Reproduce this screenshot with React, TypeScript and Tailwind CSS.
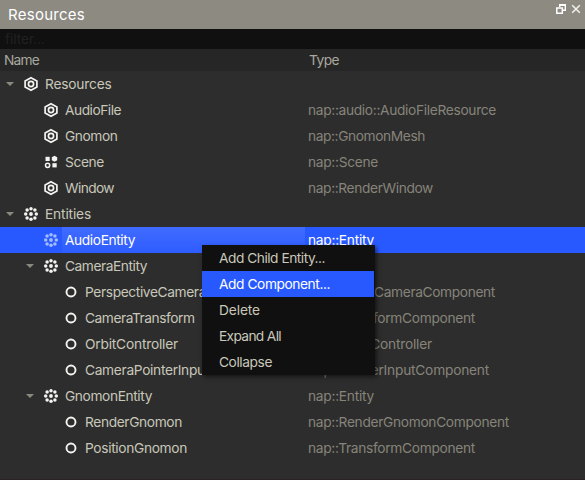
import { useLayoutEffect, useRef } from "react";
import type { ReactNode } from "react";

type Icon = "resource" | "scene" | "entity" | "component";
type Row = {
  name: string;
  width: number;
  icon: Icon;
  depth: 0 | 1 | 2;
  open?: boolean;
  type?: string;
  typeWidth?: number;
  selected?: boolean;
};

const rows: Row[] = [
  { name: "Resources", width: 66.5, icon: "resource", depth: 0, open: true },
  { name: "AudioFile", width: 56, icon: "resource", depth: 1, type: "nap::audio::AudioFileResource", typeWidth: 188 },
  { name: "Gnomon", width: 52.5, icon: "resource", depth: 1, type: "nap::GnomonMesh", typeWidth: 117 },
  { name: "Scene", width: 39, icon: "scene", depth: 1, type: "nap::Scene", typeWidth: 70 },
  { name: "Window", width: 49, icon: "resource", depth: 1, type: "nap::RenderWindow", typeWidth: 125 },
  { name: "Entities", width: 46, icon: "entity", depth: 0, open: true },
  { name: "AudioEntity", width: 70, icon: "entity", depth: 1, type: "nap::Entity", typeWidth: 66, selected: true },
  { name: "CameraEntity", width: 82, icon: "entity", depth: 1, open: true },
  { name: "PerspectiveCamera", width: 121, icon: "component", depth: 2, type: "nap::PerspCameraComponent", typeWidth: 187 },
  { name: "CameraTransform", width: 109.5, icon: "component", depth: 2, type: "nap::TransformComponent", typeWidth: 167 },
  { name: "OrbitController", width: 93, icon: "component", depth: 2, type: "nap::OrbitController", typeWidth: 124 },
  { name: "CameraPointerInput", width: 124, icon: "component", depth: 2, type: "nap::PointerInputComponent", typeWidth: 181 },
  { name: "GnomonEntity", width: 87, icon: "entity", depth: 1, open: true, type: "nap::Entity", typeWidth: 66 },
  { name: "RenderGnomon", width: 97, icon: "component", depth: 2, type: "nap::RenderGnomonComponent", typeWidth: 201 },
  { name: "PositionGnomon", width: 102, icon: "component", depth: 2, type: "nap::TransformComponent", typeWidth: 167 },
];

const menu = [
  { label: "Add Child Entity...", width: 106 },
  { label: "Add Component...", width: 111, active: true },
  { label: "Delete", width: 41 },
  { label: "Expand All", width: 62 },
  { label: "Collapse", width: 53 },
];

const indents = { 0: "w-[22px]", 1: "w-[42px]", 2: "w-[62px]" };

/** Text whose tracking is adjusted so that it fills the given width. */
function Label({ text, width, className = "" }: { text: string; width: number; className?: string }) {
  const ref = useRef<HTMLSpanElement>(null);
  useLayoutEffect(() => {
    const el = ref.current;
    if (!el) return;
    el.style.letterSpacing = "0px";
    const natural = el.getBoundingClientRect().width;
    el.style.letterSpacing = `${(width - natural) / text.length}px`;
  }, [text, width]);
  return (
    <span ref={ref} className={`inline-block shrink-0 whitespace-pre ${className}`}>
      {text}
    </span>
  );
}

function Svg({ children, className }: { children: ReactNode; className: string }) {
  return (
    <svg viewBox="0 0 18 18" className={`h-[18px] w-[18px] shrink-0 ${className}`} fill="currentColor">
      {children}
    </svg>
  );
}

function RowIcon({ icon, selected }: { icon: Icon; selected?: boolean }) {
  const color = selected ? "text-[#a3bbff]" : "text-[#f4f4f2]";
  if (icon === "resource")
    return (
      <Svg className={color}>
        <path d="M9 2.8 14.9 6v6L9 15.2 3.1 12V6Z" fill="none" stroke="currentColor" strokeWidth="1.7" />
        <circle cx="9" cy="9" r="2.6" fill="none" stroke="currentColor" strokeWidth="1.7" />
      </Svg>
    );
  if (icon === "scene")
    return (
      <Svg className={color}>
        <rect x="3.5" y="3.8" width="4.2" height="4.2" />
        <path d="M12.5 2.8 15.2 4.3v2.9l-2.7 1.5-2.7-1.5V4.3Z" />
        <circle cx="5.6" cy="12.3" r="2.1" fill="none" stroke="currentColor" strokeWidth="1.5" />
        <rect x="10.4" y="10.2" width="4.3" height="4.2" />
      </Svg>
    );
  if (icon === "entity")
    return (
      <Svg className={color}>
        <circle cx="9" cy="9" r="1.9" />
        <circle cx="9" cy="3.7" r="1.75" />
        <circle cx="12.9" cy="5.1" r="1.75" />
        <circle cx="14.3" cy="9" r="1.75" />
        <circle cx="12.9" cy="12.9" r="1.75" />
        <circle cx="9" cy="14.3" r="1.75" />
        <circle cx="5.1" cy="12.9" r="1.75" />
        <circle cx="3.7" cy="9" r="1.75" />
        <circle cx="5.1" cy="5.1" r="1.75" />
      </Svg>
    );
  return (
    <Svg className={color}>
      <circle cx="9" cy="9" r="4.5" fill="none" stroke="currentColor" strokeWidth="1.9" />
    </Svg>
  );
}

function TreeRow({ row }: { row: Row }) {
  return (
    <div className={`flex h-[26px] shrink-0 ${row.selected ? "bg-[#2859ff] text-white" : "text-[#c8c7b9]"}`}>
      <div className="flex w-[305px] shrink-0 items-center">
        <div className={`flex shrink-0 justify-end pr-2 ${indents[row.depth]}`}>
          {row.open && (
            <svg viewBox="0 0 8 4" className="h-1 w-2 fill-[#8b897e]">
              <path d="M0 0h8L4 4Z" />
            </svg>
          )}
        </div>
        <RowIcon icon={row.icon} selected={row.selected} />
        <div
          className={`ml-[2px] flex h-full grow items-center pl-[3px] ${
            row.selected ? "bg-linear-to-b from-[#416bff] to-[#2e5dff]" : ""
          }`}
        >
          <Label text={row.name} width={row.width} />
        </div>
      </div>
      <div className={`flex items-center pl-[3px] ${row.selected ? "" : "text-[#86847a]"}`}>
        {row.type && <Label text={row.type} width={row.typeWidth ?? 66} />}
      </div>
    </div>
  );
}

export default function App() {
  return (
    <div className="relative flex h-[480px] w-[585px] flex-col overflow-hidden bg-[#2d2d2d] font-[Inter,sans-serif] text-[13.75px] leading-[18px]">
      <div className="flex h-[29px] shrink-0 justify-between bg-[#8d8a82] pl-2 text-white">
        <div className="flex items-center pt-px">
          <Label text="Resources" width={77} className="text-[15px]" />
        </div>
        <div className="flex gap-[5px] pt-1 pr-1">
          <svg viewBox="0 0 10 10" className="h-[10px] w-[10px]" fill="none" stroke="white">
            <path d="M3.7 3V1h5.6v5.3H7" strokeWidth="1.4" />
            <path d="M3 1h7" strokeWidth="2" />
            <path d="M.8 4h5.5v5.3H.8Z" strokeWidth="1.5" />
          </svg>
          <svg viewBox="0 0 10 10" className="h-[10px] w-[10px]" fill="none" stroke="#f2f2ef" strokeWidth="1.5">
            <path d="m1.2 1.2 7.6 7.6M8.8 1.2 1.2 8.8" />
          </svg>
        </div>
      </div>
      <div className="flex h-5 shrink-0 items-center bg-[#101010] pl-[5px] text-[#202020]">
        <Label text="filter..." width={40} />
      </div>
      <div className="flex h-[22px] shrink-0 items-center bg-[#262626] text-[#a9a89f]">
        <div className="w-[305px] pl-1">
          <Label text="Name" width={35} />
        </div>
        <div className="pl-1">
          <Label text="Type" width={30} />
        </div>
      </div>
      <div className="flex grow flex-col">
        {rows.map((row, i) => (
          <TreeRow key={i} row={row} />
        ))}
      </div>
      <div className="h-px shrink-0 bg-[#2a2224]" />
      <div className="absolute top-[245px] left-[202px] w-[173px] bg-[#101010] shadow-[2px_2px_4px_rgba(0,0,0,0.5)]">
        {menu.map((item) => (
          <div
            key={item.label}
            className={`flex h-[26px] items-center pl-[17px] ${
              item.active ? "mr-px bg-[#2859ff] text-white" : "text-[#c8c7b9]"
            }`}
          >
            <Label text={item.label} width={item.width} />
          </div>
        ))}
      </div>
    </div>
  );
}
